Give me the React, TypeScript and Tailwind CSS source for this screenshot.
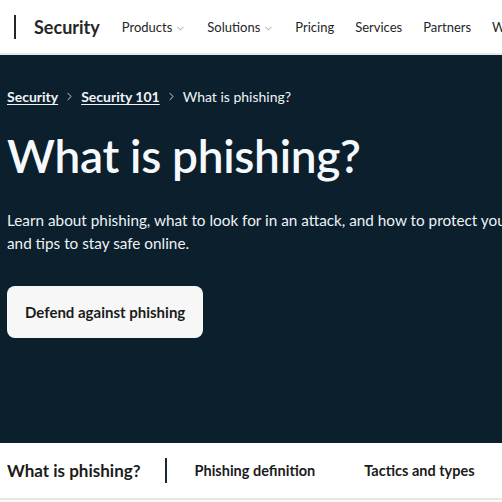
import { ChevronDown, ChevronRight } from "lucide-react";

const NAV = [
    { label: "Products", menu: true },
    { label: "Solutions", menu: true },
    { label: "Pricing" },
    { label: "Services" },
    { label: "Partners" },
    { label: "Why" },
];

const TABS = ["Phishing definition", "Tactics and types", "Examples"];

export default function App() {
    return (
        <div className="w-[502px] h-[502px] overflow-hidden bg-white font-['Segoe_UI','Lato',sans-serif]">
            {/* Header */}
            <header className="h-[55px] flex items-center border-b-2 border-[#e6e8ea] whitespace-nowrap">
                <div className="shrink-0 ml-[14px] w-[2px] h-[24px] bg-[#262626]" />
                <span className="ml-[18px] pt-[2px] text-[18px] font-bold text-[#262626]">Security</span>
                <nav className="ml-[22px] pt-[3px] flex items-center gap-[21px] text-[13px] text-[#262626]">
                    {NAV.map((item) => (
                        <span key={item.label} className="flex items-center gap-[3px]">
                            {item.label}
                            {item.menu && <ChevronDown className="w-[11px] h-[11px] text-[#767676]" strokeWidth={1.5} />}
                        </span>
                    ))}
                </nav>
            </header>

            {/* Hero */}
            <section className="h-[388px] bg-[#0b1f2d] px-[7px] pt-[31px] text-white">
                <div className="flex items-center gap-[5px] text-[14px] text-[#f0f4f7]">
                    <a className="font-bold underline underline-offset-2">Security</a>
                    <ChevronRight className="w-[13px] h-[13px]" strokeWidth={1.5} />
                    <a className="font-bold underline underline-offset-2">Security 101</a>
                    <ChevronRight className="w-[13px] h-[13px]" strokeWidth={1.5} />
                    <span>What is phishing?</span>
                </div>
                <h1 className="mt-[19px] text-[46px] leading-[60px] font-semibold tracking-[-0.3px] text-[#f5f9fc]">
                    What is phishing?
                </h1>
                <p className="mt-[23px] w-[560px] text-[15.3px] leading-[23px] text-[#eef2f5]">
                    Learn about phishing, what to look for in an attack, and how to protect yourself
                    <br />
                    and tips to stay safe online.
                </p>
                <button className="mt-[31px] h-[52px] px-[18px] rounded-[8px] bg-[#f7f7f7] text-[15px] font-bold text-[#1b1b1b]">
                    Defend against phishing
                </button>
            </section>

            {/* Tabs */}
            <div className="h-[57px] flex items-center border-b-2 border-[#ece8e1] px-[7px] whitespace-nowrap">
                <span className="text-[17px] font-bold text-[#1b1b1b]">What is phishing?</span>
                <div className="shrink-0 ml-[24px] w-[2px] h-[25px] bg-[#1b2a3a]" />
                <div className="ml-[28px] flex items-center gap-[49px] text-[14.5px] font-bold text-[#1b1b1b]">
                    {TABS.map((t) => (
                        <span key={t}>{t}</span>
                    ))}
                </div>
            </div>
        </div>
    );
}
